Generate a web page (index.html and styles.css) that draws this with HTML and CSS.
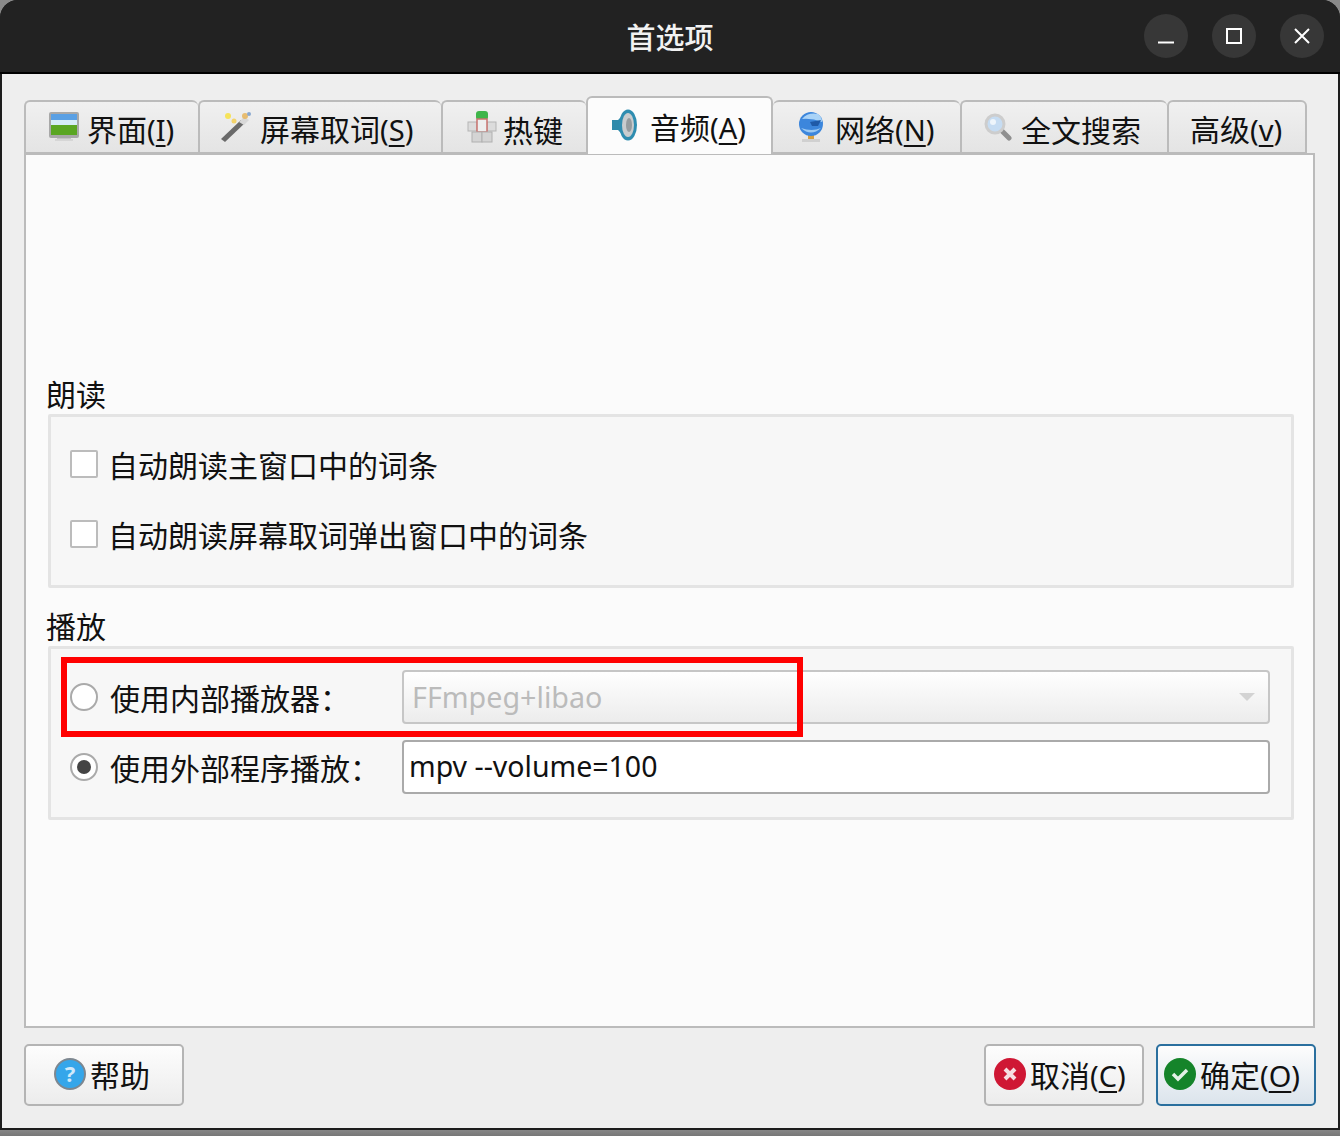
FILE: index.html
```html
<!DOCTYPE html>
<html lang="zh-CN">
<head>
<meta charset="utf-8">
<title>首选项</title>
<link rel="stylesheet" href="styles.css">
</head>
<body>
<div class="window">
  <header class="titlebar">
    <div class="title">首选项</div>
    <div class="controls">
      <button class="wbtn"><svg width="16" height="16" viewBox="0 0 16 16"><path d="M0 14.5H16" stroke="#fff" stroke-width="2"/></svg></button>
      <button class="wbtn"><svg width="16" height="16" viewBox="0 0 16 16"><rect x="1" y="1" width="14" height="14" fill="none" stroke="#fff" stroke-width="2"/></svg></button>
      <button class="wbtn"><svg width="16" height="16" viewBox="0 0 16 16"><path d="M1 1L15 15M15 1L1 15" stroke="#fff" stroke-width="2"/></svg></button>
    </div>
  </header>
  <main class="body">
    <nav class="tabs">
      <div class="tab t1">
        <svg class="ticon" width="32" height="32" viewBox="0 0 32 32"><rect x="9" y="26" width="14" height="3" fill="#c4c4c4"/><rect x="7" y="28" width="18" height="2" fill="#d6d6d6"/><rect x="1" y="1" width="30" height="26" rx="2" fill="#a8a8a8"/><rect x="3" y="3" width="26" height="21" fill="#5aa0e4"/><rect x="3" y="9" width="26" height="5" fill="#d6ecf6"/><rect x="3" y="14" width="26" height="10" fill="#5aa622"/></svg>
        <span>界面<span class="lat">(<u>I</u>)</span></span>
      </div>
      <div class="tab t2">
        <svg class="ticon" width="32" height="32" viewBox="0 0 32 32"><path d="M1 28L21 9L25 12L5 31Z" fill="#6a6a6a"/><path d="M19 11L24 6L29 9L24 14Z" fill="#d8d8d8"/><circle cx="25" cy="5" r="3" fill="#e6b45a" opacity=".85"/><circle cx="8" cy="5" r="3" fill="#f6e35a"/><circle cx="14" cy="10" r="2.5" fill="#f3d36a"/><circle cx="29" cy="3" r="2" fill="#8aa8d0"/></svg>
        <span>屏幕取词<span class="lat">(<u>S</u>)</span></span>
      </div>
      <div class="tab t3">
        <svg class="ticon" width="30" height="32" viewBox="0 0 30 32"><rect x="9" y="0" width="12" height="9" rx="3" fill="#3fb54a"/><rect x="1" y="11" width="9" height="9" fill="#dcdcdc" stroke="#b5b5b5"/><rect x="20" y="11" width="9" height="9" fill="#dcdcdc" stroke="#b5b5b5"/><rect x="10" y="8" width="10" height="13" fill="#eee" stroke="#c9736f" stroke-width="1.5"/><rect x="5" y="21" width="10" height="10" fill="#d4d4d4" stroke="#b0b0b0"/><rect x="15" y="21" width="10" height="10" fill="#d4d4d4" stroke="#b0b0b0"/></svg>
        <span>热键</span>
      </div>
      <div class="tab t4 active">
        <svg class="ticon" width="26" height="34" viewBox="0 0 26 34"><path d="M0 12H6L15 3V31L6 22H0Z" fill="#2f8aab"/><ellipse cx="16" cy="17" rx="9" ry="15.5" fill="#2f8db0"/><ellipse cx="16" cy="17" rx="6" ry="12" fill="#c8ccce"/><ellipse cx="17" cy="17" rx="3" ry="7" fill="#959c9f"/></svg>
        <span>音频<span class="lat">(<u>A</u>)</span></span>
      </div>
      <div class="tab t5">
        <svg class="ticon" width="26" height="32" viewBox="0 0 26 32"><rect x="10" y="24" width="6" height="4" fill="#d8a040"/><rect x="4" y="28" width="18" height="3" fill="#d0d0d0"/><circle cx="13" cy="13" r="12" fill="#3c86dc"/><path d="M4 8Q10 1 20 3Q24 6 24 11Q14 7 4 8Z" fill="#a9d3f7"/><path d="M12 11L23 9L20 15L14 15Z" fill="#1f5aa8"/><path d="M3 17Q13 26 23 17Q14 21 3 17Z" fill="#9cc9f2"/></svg>
        <span>网络<span class="lat">(<u>N</u>)</span></span>
      </div>
      <div class="tab t6">
        <svg class="ticon" width="28" height="28" viewBox="0 0 28 28"><path d="M17 17L25 25" stroke="#8f8f8f" stroke-width="5" stroke-linecap="round"/><circle cx="11" cy="11" r="9" fill="#c6dcf2" stroke="#cdcdcd" stroke-width="3"/><circle cx="9" cy="9" r="3" fill="#eef5fb"/></svg>
        <span>全文搜索</span>
      </div>
      <div class="tab t7"><span>高级<span class="lat">(<u>v</u>)</span></span></div>
    </nav>
    <section class="panel">
      <h2 class="glabel first">朗读</h2>
      <div class="group read">
        <label class="row"><i class="check"></i><span>自动朗读主窗口中的词条</span></label>
        <label class="row"><i class="check"></i><span>自动朗读屏幕取词弹出窗口中的词条</span></label>
      </div>
      <h2 class="glabel">播放</h2>
      <div class="group play">
        <div class="prow">
          <i class="radio"></i><span class="plabel">使用内部播放器：</span>
          <div class="combo"><span>FFmpeg+libao</span><svg width="16" height="8" viewBox="0 0 16 8"><path d="M0 0H16L8 8Z" fill="#d3d3d3"/></svg></div>
        </div>
        <div class="prow">
          <i class="radio on"></i><span class="plabel">使用外部程序播放：</span>
          <div class="input">mpv --volume=100</div>
        </div>
      </div>
    </section>
    <footer class="buttons">
      <button class="btn help">
        <svg width="32" height="32" viewBox="0 0 32 32"><circle cx="16" cy="16" r="15" fill="#35a6ea" stroke="#7d8790" stroke-width="2"/><text x="16" y="24" text-anchor="middle" class="qmark">?</text></svg>
        <span>帮助</span>
      </button>
      <div class="spacer"></div>
      <button class="btn cancel">
        <svg width="32" height="32" viewBox="0 0 32 32"><circle cx="16" cy="16" r="16" fill="#cf1734"/><path d="M11 11L21 21M21 11L11 21" stroke="#f6dfe2" stroke-width="4"/></svg>
        <span>取消<span class="lat">(<u>C</u>)</span></span>
      </button>
      <button class="btn primary">
        <svg width="32" height="32" viewBox="0 0 32 32"><circle cx="16" cy="16" r="16" fill="#15842a"/><path d="M9 16L14 21L23 12" fill="none" stroke="#e4f2e6" stroke-width="3.5"/></svg>
        <span>确定<span class="lat">(<u>O</u>)</span></span>
      </button>
    </footer>
  </main>
  <div class="redbox"></div>
</div>
</body>
</html>
```

FILE: styles.css
```css
* { box-sizing: border-box; }
html, body { margin: 0; height: 100%; }
body {
  width: 1340px; height: 1136px; overflow: hidden;
  background: linear-gradient(#8a8a8a 1128px, #777 1136px);
  font-family: "Noto Sans CJK SC", "Noto Sans", sans-serif;
  font-size: 30px; color: #111;
}
.window {
  position: relative;
  width: 1340px; height: 1130px;
  display: flex; flex-direction: column;
  border-radius: 18px 18px 0 0;
  overflow: hidden;
  background: #1c1c1c;
  padding: 0 2px 2px 2px;
}
.titlebar {
  height: 74px; flex: none;
  margin: 0 -2px;
  background: #222;
  border-bottom: 2px solid #000;
  display: flex; align-items: center; justify-content: center;
  position: relative;
}
.title { color: #f2f2f2; font-size: 29px; font-weight: 500; line-height: 1; }
.controls { position: absolute; right: 16px; top: 14px; display: flex; gap: 24px; }
.wbtn {
  width: 44px; height: 44px; padding: 0; border: 0; border-radius: 50%;
  background: #373737;
  display: flex; align-items: center; justify-content: center;
}
.body {
  flex: 1; background: #eeeeee;
  padding: 22px 22px 0 22px;
  display: flex; flex-direction: column;
}
.tabs { display: flex; height: 58px; flex: none; margin-bottom: -1px; align-items: flex-end; position: relative; z-index: 1; margin-left: 0; }
.tab {
  height: 54px; flex: none;
  display: flex; align-items: center;
  background: linear-gradient(#f0f0f0, #e4e4e4);
  border: 2px solid #bbbbbb; border-right-width: 0;
  border-radius: 6px 6px 0 0;
  line-height: 54px;
  white-space: nowrap;
}
.tab > span { position: relative; top: 2px; }
.tab u, .btn u { text-underline-offset: 4px; text-decoration-thickness: 2px; }
.lat { font-family: "Noto Sans", sans-serif; font-size: 29px; }
.t1 { width: 174px; padding-left: 22px; gap: 7px; }
.t2 { width: 243px; padding-left: 20px; gap: 8px; }
.t3 { width: 145px; padding-left: 24px; gap: 6px; }
.t4 { width: 187px; padding-left: 24px; gap: 12px; }
.t5 { width: 187px; padding-left: 25px; gap: 11px; }
.t6 { width: 207px; padding-left: 22px; gap: 9px; }
.t7 { width: 140px; padding-left: 21px; border-right-width: 2px; }
.tab.active {
  height: 58px;
  background: #fcfcfc;
  border-right-width: 2px; border-bottom: 0;
  padding-bottom: 2px;
}
.active + .tab { border-left-width: 0; }
.panel {
  height: 875px; flex: none;
  background: #fbfbfb;
  border: 2px solid #bbbbbb;
  padding: 0 19px 0 22px;
  margin-right: 1px;
  display: flex; flex-direction: column;
}
.glabel { margin: 0 0 0 -2px; font-size: 30px; font-weight: 400; line-height: 38px; height: 40px; }
.glabel.first { margin-top: 219px; }
.group { border: 3px solid #e4e4e4; background: #f7f7f7; border-radius: 2px; }
.read { height: 174px; padding: 26px 20px 0 19px; display: flex; flex-direction: column; gap: 28px; margin-bottom: 18px; }
.play { height: 174px; padding: 21px 21px 0 19px; display: flex; flex-direction: column; gap: 16px; }
.row { display: flex; align-items: center; gap: 10px; height: 42px; line-height: 42px; }
.prow { display: flex; align-items: center; height: 54px; }
.check { width: 28px; height: 28px; background: #fff; border: 2px solid #bcbcbc; border-radius: 2px; flex: none; }
.radio { width: 28px; height: 28px; background: #fff; border: 2px solid #aaa; border-radius: 50%; flex: none; display: flex; align-items: center; justify-content: center; }
.radio.on::after { content: ""; width: 14px; height: 14px; background: #444; border-radius: 50%; }
.plabel { width: 304px; padding-left: 12px; flex: none; white-space: nowrap; }
.combo {
  flex: 1; height: 54px;
  border: 2px solid #c6c6c6; border-radius: 4px;
  background: linear-gradient(#fff, #f7f7f7 40%, #ececec);
  display: flex; align-items: center; justify-content: space-between;
  padding: 0 13px 1px 8px;
  color: #bbb; font-family: "Noto Sans", sans-serif; font-size: 28.7px;
}
.input {
  flex: 1; height: 54px;
  border: 2px solid #aaa; border-radius: 4px;
  background: #fff;
  display: flex; align-items: center;
  padding: 0 0 2px 5px;
  color: #111; font-family: "Noto Sans", sans-serif; font-size: 28.5px;
}
.buttons { display: flex; gap: 12px; padding-top: 16px; }
.spacer { flex: 1; }
.btn {
  width: 160px; height: 62px;
  border: 2px solid #b4b4b4; border-radius: 5px;
  background: linear-gradient(#fdfdfd, #ececec);
  font: inherit; color: #111;
  display: flex; align-items: center; gap: 4px;
  padding: 0 0 2px 0;
}
.help { padding-left: 28px; }
.cancel { padding-left: 8px; }
.primary { padding-left: 6px; border-color: #2a6f9e; background: linear-gradient(#fdfdfd, #dbe4ec); }
.qmark { font-family: "Noto Sans", sans-serif; font-size: 22px; font-weight: 700; fill: #cfe9fb; }
.redbox {
  position: absolute; left: 61px; top: 657px; width: 742px; height: 80px;
  border: 6px solid #ff0000; pointer-events: none;
}
```
